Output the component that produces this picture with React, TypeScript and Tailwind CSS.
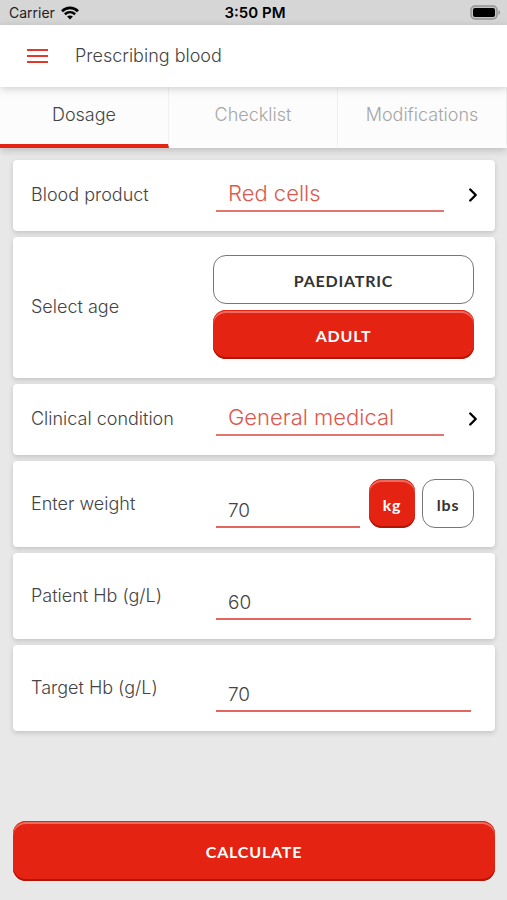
import React, { useState } from 'react';
import { ChevronRight } from 'lucide-react';

type Tab = 'Dosage' | 'Checklist' | 'Modifications';
type Age = 'paediatric' | 'adult';
type Unit = 'kg' | 'lbs';

const TABS: Tab[] = ['Dosage', 'Checklist', 'Modifications'];

const StatusBar: React.FC = () => (
  <div className="grid grid-cols-3 items-center h-[25px] pl-[9px] pr-[6px] bg-[#d6d6d6] text-black">
    <div className="flex items-center gap-[6px]">
      <span className="text-[14px] leading-5 font-normal text-[#222222]">Carrier</span>
      <svg width="18" height="14" viewBox="0 0 18 14" fill="none" stroke="black" strokeWidth="2.6">
        <path d="M1 5.2C5.6.7 12.4.7 17 5.2" />
        <path d="M3.9 8.3c3-2.8 7.2-2.8 10.2 0" />
        <path d="M9 13.4 6.1 10.5c1.7-1.5 4.1-1.5 5.8 0Z" fill="black" stroke="none" />
      </svg>
    </div>
    <span className="text-center text-[15px] leading-5 font-semibold">3:50 PM</span>
    <svg className="justify-self-end" width="31" height="15" viewBox="0 0 31 15">
      <rect x="1" y="1" width="26" height="13" rx="4" fill="#c4c4c4" stroke="#929292" strokeWidth="1.4" />
      <rect x="3" y="3" width="22" height="9" rx="2" fill="black" />
      <path d="M28.5 5.2c2 .6 2 4 0 4.6Z" fill="#929292" />
    </svg>
  </div>
);

interface RowProps {
  label: string;
  htmlFor?: string;
  children: React.ReactNode;
}

const Row: React.FC<RowProps> = ({ label, htmlFor, children }) => (
  <div className="grid grid-cols-[182px_minmax(0,1fr)] items-center pl-[18px] pr-[21px] pt-[18px] pb-[19px] bg-white rounded-[4px] shadow-[0_2px_5px_rgba(0,0,0,0.16)]">
    <label htmlFor={htmlFor} className="text-[18px] leading-5">{label}</label>
    {children}
  </div>
);

interface PickerProps {
  id: string;
  options: string[];
}

const Picker: React.FC<PickerProps> = ({ id, options }) => (
  <div className="flex items-center pl-[3px]">
    <select
      id={id}
      className="appearance-none flex-1 min-w-0 h-[34px] pl-3 pb-[3px] bg-transparent border-b-2 border-[#e2766e] text-[22px] leading-6 text-[#e0574e] outline-none"
    >
      {options.map(o => <option key={o}>{o}</option>)}
    </select>
    <ChevronRight className="w-[22px] h-[22px] ml-[18px] -mr-[10px] text-black" strokeWidth={2.6} />
  </div>
);

interface NumberFieldProps {
  id: string;
  initial: string;
}

const NumberField: React.FC<NumberFieldProps> = ({ id, initial }) => {
  const [value, setValue] = useState(initial);
  return (
    <input
      id={id}
      type="text"
      inputMode="numeric"
      value={value}
      onChange={e => setValue(e.target.value)}
      className="flex-1 w-full min-w-0 h-[34px] pl-3 bg-transparent border-b-2 border-[#e2665d] text-[19px] leading-6 outline-none"
    />
  );
};

interface ChoiceProps {
  active: boolean;
  className?: string;
  onClick: () => void;
  children: React.ReactNode;
}

const raised = 'bg-[#e42313] text-white shadow-[inset_0_-2px_0_#b01508,inset_0_1px_0_#e42313,inset_0_3px_0_#ec6a60]';

const Choice: React.FC<ChoiceProps> = ({ active, className = '', onClick, children }) => (
  <button
    onClick={onClick}
    aria-pressed={active}
    className={`h-[49px] rounded-[13px] font-['Lato',sans-serif] pt-[2px] text-[16px] leading-5 font-bold tracking-wider ${
      active ? raised : 'border border-[#777777] bg-white text-[#333333]'
    } ${className}`}
  >
    {children}
  </button>
);

export default function App() {
  const [tab, setTab] = useState<Tab>('Dosage');
  const [age, setAge] = useState<Age>('adult');
  const [unit, setUnit] = useState<Unit>('kg');

  return (
    <div className="min-h-screen flex flex-col bg-[#e8e8e8] font-['Inter',sans-serif] font-light text-[#444444]">
      <StatusBar />

      {/* Header */}
      <header className="relative z-10 flex items-center gap-[27px] h-[62px] px-[27px] bg-white shadow-[0_2px_8px_rgba(0,0,0,0.18)]">
        <button aria-label="Menu">
          <svg width="21" height="14" viewBox="0 0 21 14" fill="#e03a2f">
            <rect width="21" height="2" />
            <rect y="6" width="21" height="2" />
            <rect y="12" width="21" height="2" />
          </svg>
        </button>
        <h1 className="text-[18px] leading-6">Prescribing blood</h1>
      </header>

      {/* Tabs */}
      <nav className="grid grid-cols-3 h-[61px] bg-[#fcfcfc] shadow-[0_2px_8px_rgba(0,0,0,0.2)]">
        {TABS.map(t => (
          <button
            key={t}
            onClick={() => setTab(t)}
            className={`border-r border-r-[#f0f0f0] border-b-4 pb-[2px] text-[18px] leading-6 ${
              t === tab ? 'border-b-[#e42313]' : 'border-b-transparent text-[#a6a6a6]'
            }`}
          >
            {t}
          </button>
        ))}
      </nav>

      <main className="flex-1 flex flex-col gap-[6px] pl-[13px] pr-3 pt-3">
        <Row label="Blood product" htmlFor="product">
          <Picker id="product" options={['Red cells', 'Platelets', 'Plasma']} />
        </Row>

        <Row label="Select age">
          <div className="flex flex-col gap-[6px]">
            <Choice active={age === 'paediatric'} onClick={() => setAge('paediatric')}>PAEDIATRIC</Choice>
            <Choice active={age === 'adult'} onClick={() => setAge('adult')}>ADULT</Choice>
          </div>
        </Row>

        <Row label="Clinical condition" htmlFor="condition">
          <Picker id="condition" options={['General medical', 'Surgical']} />
        </Row>

        <Row label="Enter weight" htmlFor="weight">
          <div className="flex items-end pl-[3px]">
            <NumberField id="weight" initial="70" />
            <Choice active={unit === 'kg'} className="w-[46px] ml-[9px]" onClick={() => setUnit('kg')}>kg</Choice>
            <Choice active={unit === 'lbs'} className="w-[52px] ml-[7px]" onClick={() => setUnit('lbs')}>lbs</Choice>
          </div>
        </Row>

        <Row label="Patient Hb (g/L)" htmlFor="patient-hb">
          <div className="flex items-end h-[49px] px-[3px]">
            <NumberField id="patient-hb" initial="60" />
          </div>
        </Row>

        <Row label="Target Hb (g/L)" htmlFor="target-hb">
          <div className="flex items-end h-[49px] px-[3px]">
            <NumberField id="target-hb" initial="70" />
          </div>
        </Row>
      </main>

      <footer className="pl-[13px] pr-3 pt-6 pb-[19px]">
        <button className={`w-full h-[60px] rounded-[13px] font-['Lato',sans-serif] pt-[2px] text-[16px] leading-5 font-bold tracking-wider ${raised}`}>
          CALCULATE
        </button>
      </footer>
    </div>
  );
}
